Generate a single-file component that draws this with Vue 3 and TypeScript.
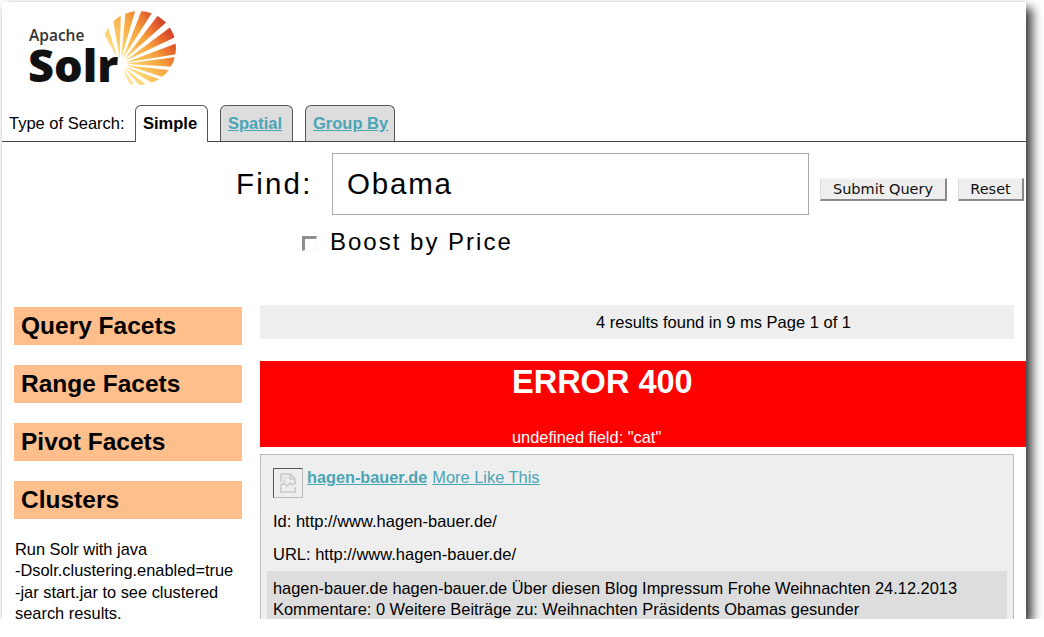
<script setup lang="ts">
import { ref } from 'vue'

const query = ref('Obama')
const tabs = [
  { label: 'Simple', active: true },
  { label: 'Spatial', active: false },
  { label: 'Group By', active: false }
]
const facets = ['Query Facets', 'Range Facets', 'Pivot Facets', 'Clusters']

// sun rays of the logo, wedges from one origin clipped by a circle
const ox = 98
const oy = 57
const rayAngles = [60, 43, 26, 12, -2, -15, -31, -47, -63, -79, -94, -113]
const rays = rayAngles.map((a) => {
  const half = 5.2
  const p = (deg: number, r: number) => {
    const rad = (deg * Math.PI) / 180
    return `${(ox + Math.cos(rad) * r).toFixed(1)},${(oy + Math.sin(rad) * r).toFixed(1)}`
  }
  return [p(a - 1.5, 7), p(a + 1.5, 7), p(a + half, 90), p(a - half, 90)].join(' ')
})
</script>

<template>
  <div class="window">
    <header class="logo">
      <div class="logo-text">
        <span class="apache">Apache</span>
        <span class="solr">Solr</span>
      </div>
      <svg class="sun" width="180" height="100" viewBox="0 0 180 100">
        <defs>
          <clipPath id="sun-clip"><circle cx="117" cy="41" r="37" /></clipPath>
          <linearGradient id="sun-fill" gradientUnits="userSpaceOnUse" x1="84" y1="72" x2="152" y2="22">
            <stop offset="0" stop-color="#fff0b8" />
            <stop offset="0.35" stop-color="#fdd36e" />
            <stop offset="0.65" stop-color="#f5a03c" />
            <stop offset="0.85" stop-color="#e4602c" />
            <stop offset="1" stop-color="#cc352a" />
          </linearGradient>
        </defs>
        <g clip-path="url(#sun-clip)">
          <polygon v-for="(pts, i) in rays" :key="i" :points="pts" fill="url(#sun-fill)" />
        </g>
      </svg>
    </header>

    <nav class="tabs">
      <span class="tabs-label">Type of Search:</span>
      <span v-for="tab in tabs" :key="tab.label" class="tab" :class="{ active: tab.active }">
        <span v-if="tab.active">{{ tab.label }}</span>
        <a v-else href="#">{{ tab.label }}</a>
      </span>
    </nav>

    <form class="search" @submit.prevent>
      <div class="find-row">
        <label class="find-label">Find:</label>
        <input v-model="query" class="find-input" type="text" />
        <button class="btn submit" type="submit">Submit Query</button>
        <button class="btn reset" type="reset">Reset</button>
      </div>
      <div class="boost-row">
        <span class="check"></span>
        <span>Boost by Price</span>
      </div>
    </form>

    <div class="content">
      <aside class="sidebar">
        <h2 v-for="f in facets" :key="f" class="facet">{{ f }}</h2>
        <p class="note">Run Solr with java <span class="nowrap">-Dsolr.clustering.enabled=true</span> <span class="nowrap">-jar</span> start.jar to see clustered search results.</p>
      </aside>

      <main class="results">
        <div class="pagination">4 results found in 9 ms Page 1 of 1</div>
        <div class="error">
          <h1>ERROR 400</h1>
          <p>undefined field: "cat"</p>
        </div>
        <article class="doc">
          <div class="doc-head">
            <span class="broken">
              <svg width="18" height="20" viewBox="0 0 18 20" fill="none" stroke="#cacaca" stroke-width="1.7">
                <path d="M2 9V1h9l5 5v4M11 1v5h5" />
                <path d="M1 13l4-3 3 3 3-3 2 2 4-2" />
                <path d="M2 14v5h14v-5" />
                <path d="M4 5h4M4 8h3" stroke-width="1.2" />
              </svg>
            </span>
            <a class="doc-title" href="#">hagen-bauer.de</a>
            <a class="doc-more" href="#">More Like This</a>
          </div>
          <p class="field">Id: http://www.hagen-bauer.de/</p>
          <p class="field">URL: http://www.hagen-bauer.de/</p>
          <div class="snippet">hagen-bauer.de hagen-bauer.de Über diesen Blog Impressum Frohe Weihnachten 24.12.2013 Kommentare: 0 Weitere Beiträge zu: Weihnachten Präsidents Obamas gesunder</div>
        </article>
      </main>
    </div>
  </div>
</template>

<style>
html, body {
  margin: 0;
  background: #fff;
}
</style>

<style scoped>
.window {
  width: 1024px;
  height: 617px;
  margin: 2px 0 0 2px;
  background: #fff;
  overflow: hidden;
  box-shadow: 6px 6px 10px rgba(0, 0, 0, 0.78), 0 0 3px rgba(0, 0, 0, 0.08);
  font-family: "Liberation Sans", Arial, sans-serif;
  font-size: 16.5px;
  color: #000;
}

.logo {
  height: 103px;
  display: flex;
  position: relative;
}
.logo-text {
  display: flex;
  flex-direction: column;
  padding: 24px 0 0 26px;
  font-family: "Open Sans", "Liberation Sans", sans-serif;
}
.apache {
  font-size: 15.5px;
  line-height: 18px;
  font-weight: 600;
  color: #333;
  margin-left: 1px;
}
.solr {
  font-size: 45px;
  line-height: 42px;
  font-weight: 800;
  color: #111;
}
.sun {
  position: absolute;
  left: 20px;
  top: 5px;
}

.tabs {
  height: 36px;
  display: flex;
  align-items: flex-end;
  border-bottom: 1px solid #444;
}
.tabs-label {
  width: 133px;
  padding-left: 7px;
  box-sizing: border-box;
  align-self: center;
}
.tab {
  box-sizing: border-box;
  height: 36px;
  min-width: 73px;
  margin-right: 12px;
  padding: 0 6px 0 7px;
  display: flex;
  align-items: center;
  border: 1px solid #555;
  border-bottom: none;
  border-radius: 6px 6px 0 0;
  background: #ddd;
  font-weight: bold;
}
.tab.active {
  background: #fff;
  height: 37px;
  margin-bottom: -1px;
  padding-bottom: 1px;
}
.tab a {
  color: #4aa5b5;
}

.search {
  height: 163px;
  box-sizing: border-box;
  padding-top: 11px;
}
.find-row {
  display: flex;
  align-items: flex-start;
  padding-left: 234px;
}
.find-label {
  font-size: 29.5px;
  line-height: 62px;
  letter-spacing: 2.2px;
  width: 96px;
}
.find-input {
  box-sizing: border-box;
  width: 477px;
  height: 62px;
  padding: 0 14px;
  border: 1px solid #aaa;
  outline: none;
  font-family: inherit;
  font-size: 29.5px;
  letter-spacing: 1.8px;
  color: #000;
}
.btn {
  box-sizing: border-box;
  height: 23px;
  margin-top: 25px;
  padding: 0;
  border: 1px solid;
  border-color: #f4f4f4 #888 #888 #ddd;
  border-width: 1px 2px 2px 1px;
  background: #eee;
  font-family: "DejaVu Sans", sans-serif;
  font-size: 14.5px;
  color: #111;
}
.submit {
  width: 127px;
  margin-left: 11px;
}
.reset {
  width: 66px;
  margin-left: 11px;
}
.boost-row {
  display: flex;
  align-items: center;
  margin: 12px 0 0 300px;
  font-size: 24px;
  line-height: 30px;
  letter-spacing: 2px;
}
.check {
  box-sizing: border-box;
  width: 15px;
  height: 15px;
  margin-right: 13px;
  margin-top: 3px;
  border: 3px solid #8f8f8f;
  border-right: 1px solid #f7f7f7;
  border-bottom: 1px solid #f7f7f7;
}

.content {
  display: grid;
  grid-template-columns: 228px 754px;
  column-gap: 18px;
  padding-left: 12px;
}
.sidebar {
  padding-top: 2px;
}
.facet {
  box-sizing: border-box;
  height: 38px;
  margin: 0 0 20px;
  padding-left: 7px;
  background: #ffbf8c;
  font-size: 24.5px;
  line-height: 37px;
  font-weight: bold;
}
.note {
  margin: 0 0 0 1px;
  font-size: 16.4px;
  line-height: 21.3px;
}
.nowrap {
  white-space: nowrap;
}

.pagination {
  height: 34px;
  background: #eee;
  line-height: 34px;
  padding-left: 336px;
  box-sizing: border-box;
}
.error {
  width: 800px;
  height: 86px;
  margin-top: 22px;
  position: relative;
  background: #f00;
  color: #fff;
  padding-left: 252px;
  box-sizing: border-box;
}
.error h1 {
  margin: 0;
  font-size: 32.5px;
  line-height: 42px;
  font-weight: bold;
}
.error p {
  margin: 0;
  padding-top: 25px;
  font-size: 16.4px;
  line-height: 18px;
}
.doc {
  margin-top: 7px;
  height: 200px;
  box-sizing: border-box;
  padding: 13px 6px 0;
  border: 1px solid #bbb;
  background: #eee;
}
.doc-head {
  display: flex;
  align-items: flex-start;
  padding-left: 6px;
  gap: 5px;
}
.broken {
  box-sizing: border-box;
  width: 30px;
  height: 30px;
  margin-right: -1px;
  display: flex;
  align-items: center;
  justify-content: center;
  border: 1px solid;
  border-color: #555 #bbb #bbb #555;
}
.doc-title {
  font-size: 16.3px;
  line-height: 18px;
  font-weight: bold;
  color: #4aa5b5;
}
.doc-more {
  font-size: 16.4px;
  line-height: 18px;
  color: #4aa5b5;
}
.field {
  margin: 0 0 14px;
  padding-left: 6px;
  line-height: 19px;
}
.doc-head + .field {
  margin-top: 14px;
}
.snippet {
  margin-top: -7px;
  padding: 7px 6px 0;
  min-height: 80px;
  background: #ddd;
  font-size: 16.4px;
  line-height: 21px;
}
</style>
